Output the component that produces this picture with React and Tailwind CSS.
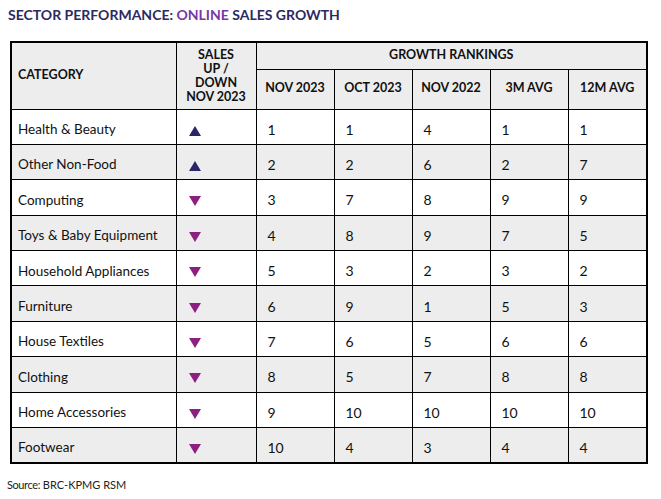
import React from "react";

const rows = [
  ["Health & Beauty", "up", 1, 1, 4, 1, 1],
  ["Other Non-Food", "up", 2, 2, 6, 2, 7],
  ["Computing", "down", 3, 7, 8, 9, 9],
  ["Toys & Baby Equipment", "down", 4, 8, 9, 7, 5],
  ["Household Appliances", "down", 5, 3, 2, 3, 2],
  ["Furniture", "down", 6, 9, 1, 5, 3],
  ["House Textiles", "down", 7, 6, 5, 6, 6],
  ["Clothing", "down", 8, 5, 7, 8, 8],
  ["Home Accessories", "down", 9, 10, 10, 10, 10],
  ["Footwear", "down", 10, 4, 3, 4, 4],
];

const Arrow = ({ dir }) =>
  dir === "up" ? (
    <svg width="12" height="10" viewBox="0 0 12 10">
      <polygon points="6,0 12,10 0,10" fill="#2a2668" />
    </svg>
  ) : (
    <svg width="12" height="10" viewBox="0 0 12 10">
      <polygon points="0,0 12,0 6,10" fill="#8c1f80" />
    </svg>
  );

const head = "border border-black bg-[#ededed] font-bold text-[12.5px] text-[#111] uppercase";

export default function App() {
  return (
    <div className="w-[661px] h-[499px] bg-white relative font-['Lato',sans-serif]">
      <h1 className="pt-[7px] pl-[8px] text-[14px] font-bold text-[#2d2a62] leading-[16px]">
        SECTOR PERFORMANCE: <span className="text-[#7b35a6]">ONLINE</span> SALES GROWTH
      </h1>

      <table className="ml-[10px] mt-[18px] w-[636px] table-fixed border-collapse border-2 border-black text-[#111]">
        <colgroup>
          <col className="w-[165px]" />
          <col className="w-[80px]" />
          <col className="w-[78px]" />
          <col className="w-[78px]" />
          <col className="w-[78px]" />
          <col className="w-[78px]" />
          <col className="w-[79px]" />
        </colgroup>
        <thead>
          <tr className="h-[27px]">
            <th rowSpan={2} className={head + " text-left pl-[6px]"}>
              Category
            </th>
            <th rowSpan={2} className={head + " text-center leading-[14px] px-[2px]"}>
              Sales
              <br />
              Up /
              <br />
              Down
              <br />
              Nov 2023
            </th>
            <th colSpan={5} className={head + " text-center"}>
              Growth Rankings
            </th>
          </tr>
          <tr className="h-[40px]">
            {["Nov 2023", "Oct 2023", "Nov 2022", "3M Avg", "12M Avg"].map((h) => (
              <th key={h} className={head + " text-center pb-[2px]"}>
                {h}
              </th>
            ))}
          </tr>
        </thead>
        <tbody>
          {rows.map((r, i) => (
            <tr key={r[0]} className={"h-[35.4px] " + (i % 2 ? "bg-[#ededed]" : "bg-white")}>
              <td className="border border-black pl-[6px] pt-[5px] text-[13.5px]">{r[0]}</td>
              <td className="border border-black pl-[12px]">
                <div className="flex items-center pt-[8px]">
                  <Arrow dir={r[1]} />
                </div>
              </td>
              {r.slice(2).map((n, j) => (
                <td key={j} className="border border-black pl-[11px] pt-[5px] text-[14px]">
                  {n}
                </td>
              ))}
            </tr>
          ))}
        </tbody>
      </table>

      <p className="absolute left-[7px] top-[477px] text-[11px] text-[#222]">
        <span className="tracking-[-0.4px]">Source:</span> BRC-KPMG RSM
      </p>
    </div>
  );
}
